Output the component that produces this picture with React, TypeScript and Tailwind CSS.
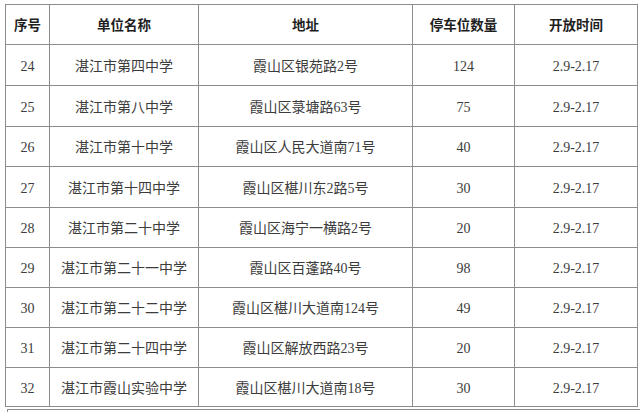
import React from "react";

const rows = [
  { no: "24", name: "湛江市第四中学", addr: "霞山区银苑路2号", n: "124", h: "h-[41px]" },
  { no: "25", name: "湛江市第八中学", addr: "霞山区菉塘路63号", n: "75", h: "h-[41px]" },
  { no: "26", name: "湛江市第十中学", addr: "霞山区人民大道南71号", n: "40", h: "h-[40px]" },
  { no: "27", name: "湛江市第十四中学", addr: "霞山区椹川东2路5号", n: "30", h: "h-[41px]" },
  { no: "28", name: "湛江市第二十中学", addr: "霞山区海宁一横路2号", n: "20", h: "h-[40px]" },
  { no: "29", name: "湛江市第二十一中学", addr: "霞山区百蓬路40号", n: "98", h: "h-[40px]" },
  { no: "30", name: "湛江市第二十二中学", addr: "霞山区椹川大道南124号", n: "49", h: "h-[40px]" },
  { no: "31", name: "湛江市第二十四中学", addr: "霞山区解放西路23号", n: "20", h: "h-[40px]" },
  { no: "32", name: "湛江市霞山实验中学", addr: "霞山区椹川大道南18号", n: "30", h: "h-[39px]" },
];

const cell = "flex items-center justify-center border-r border-b border-[#8c8c8c]";
const widths = ["w-[44px]", "w-[149px]", "w-[214px]", "w-[102px]", "w-[123px]"];

export default function App() {
  return (
    <div className="w-[640px] h-[412px] overflow-hidden bg-white pl-[5px] pt-[4px]">
      <div className="flex flex-col w-[633px] border-l border-t border-[#8c8c8c]">
        <div
          className="flex h-[40px] text-[13.5px] font-bold text-[#1e1e1e]"
          style={{ fontFamily: '"Noto Sans CJK SC", sans-serif' }}
        >
          {["序号", "单位名称", "地址", "停车位数量", "开放时间"].map((t, i) => (
            <div key={i} className={`${cell} ${widths[i]}`}>
              {t}
            </div>
          ))}
        </div>
        {rows.map((r) => (
          <div
            key={r.no}
            className={`flex ${r.h} text-[14px] text-[#3c3c3c]`}
            style={{ fontFamily: '"Liberation Serif", "Noto Sans CJK SC", serif' }}
          >
            {[r.no, r.name, r.addr, r.n, "2.9-2.17"].map((t, i) => (
              <div key={i} className={`${cell} ${widths[i]} pt-[2px]`}>
                {t}
              </div>
            ))}
          </div>
        ))}
      </div>
      <div className="ml-[2px] mt-[2px] h-[20px] w-[640px] border-l border-t border-[#8c8c8c]" />
    </div>
  );
}
